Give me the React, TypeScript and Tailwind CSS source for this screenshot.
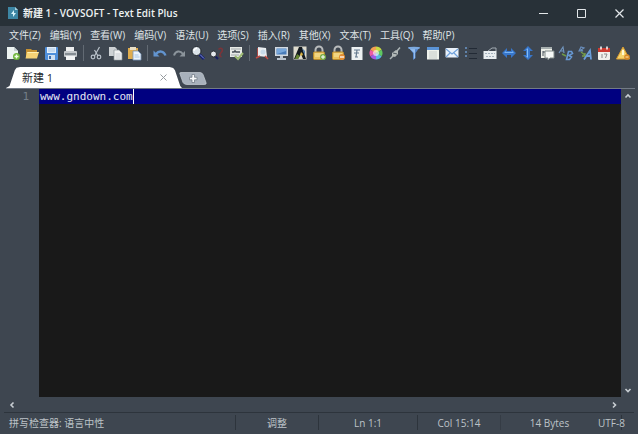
import React from "react";

const menus = [
    "文件(Z)",
    "编辑(Y)",
    "查看(W)",
    "编码(V)",
    "语法(U)",
    "选项(S)",
    "插入(R)",
    "其他(X)",
    "文本(T)",
    "工具(Q)",
    "帮助(P)",
];

const padlock = (
    <>
        <path d="M4.5 8V5a3.5 3.5 0 0 1 7 0v3" fill="none" stroke="#b9bcbd" strokeWidth="2" />
        <rect x="2.5" y="7" width="11" height="7.5" rx="1" fill="#e9c25c" stroke="#b98a2c" />
        <path d="M4 9h8M4 11h8" stroke="#f9e7a5" />
    </>
);

const groups: { label: string; icon: React.ReactNode }[][] = [
    [
        {
            label: "New",
            icon: (
                <>
                    <path d="M2 2h7l4 4v8H2z" fill="#edf3f1" />
                    <path d="M9 2v4h4" fill="#c6d0d2" />
                    <circle cx="11.5" cy="11.5" r="3.5" fill="#6fb53c" />
                    <path d="M11.5 9.5v4M9.5 11.5h4" stroke="#f2ffe6" strokeWidth="1.4" />
                </>
            ),
        },
        {
            label: "Open",
            icon: (
                <>
                    <path d="M2 4h5l1 1h5v8H2z" fill="#c69132" />
                    <path d="M3 7h12l-2 6.500H1.500z" fill="#f6d276" />
                    <path d="M3.500 7.500h11" stroke="#fff0b4" />
                </>
            ),
        },
        {
            label: "Save",
            icon: (
                <>
                    <rect x="2" y="2" width="13" height="13" rx="1" fill="#4f8fdb" />
                    <rect x="4" y="2" width="9" height="6" fill="#e4effa" />
                    <path d="M5 4h7M5 6h7" stroke="#a9c5e5" />
                    <rect x="5" y="10" width="7" height="5" fill="#d0e0f2" />
                    <rect x="6" y="11" width="2" height="3" fill="#3b6cac" />
                </>
            ),
        },
        {
            label: "Print",
            icon: (
                <>
                    <rect x="4" y="2" width="8" height="5" fill="#eceeef" />
                    <rect x="2" y="6" width="13" height="6" rx="1" fill="#c3c7cb" />
                    <path d="M3 9h11" stroke="#6f7880" strokeWidth="1.5" />
                    <rect x="4" y="11" width="9" height="4" fill="#f2f4f5" />
                </>
            ),
        },
    ],
    [
        {
            label: "Cut",
            icon: (
                <g fill="none" stroke="#b9c1c9" strokeWidth="1.2">
                    <path d="M11.500 2L6.500 11M6.500 5L10 11" />
                    <circle cx="5" cy="12" r="1.800" />
                    <circle cx="11" cy="12" r="1.800" />
                </g>
            ),
        },
        {
            label: "Copy",
            icon: (
                <>
                    <path d="M2 2h6l2 2v7H2z" fill="#cdd1d4" />
                    <path d="M7 5h5l3 3v7H7z" fill="#f0f1f2" stroke="#8a9299" strokeWidth=".7" />
                    <path d="M8.500 9h5M8.500 11h5M8.500 13h5" stroke="#bcc3c9" strokeWidth=".8" />
                </>
            ),
        },
        {
            label: "Paste",
            icon: (
                <>
                    <rect x="2" y="3" width="10" height="11" fill="#e0ac4d" />
                    <rect x="4" y="2" width="6" height="3" fill="#e9dfc5" />
                    <path d="M7 6h5l3 3v6H7z" fill="#edf4fb" stroke="#7895b6" strokeWidth=".8" />
                    <path d="M8.500 10h4M8.500 12h5" stroke="#a6c4e4" />
                </>
            ),
        },
    ],
    [
        {
            label: "Undo",
            icon: (
                <>
                    <path d="M4 9c3-4 8-3 9.500 1.500" fill="none" stroke="#6294cf" strokeWidth="2.300" />
                    <path d="M1.500 5.500v6h6z" fill="#6294cf" />
                </>
            ),
        },
        {
            label: "Redo",
            icon: (
                <>
                    <path d="M12 9C9 5 4.500 6 3 10.500" fill="none" stroke="#8b949b" strokeWidth="2" />
                    <path d="M14 6v5.500H8.500z" fill="#8b949b" />
                </>
            ),
        },
        {
            label: "Find",
            icon: (
                <>
                    <path d="M9.500 9.500l4.500 4.500" stroke="#14206f" strokeWidth="3" />
                    <path d="M10 9.500l4 4" stroke="#8793d3" />
                    <circle cx="6.500" cy="6" r="4.500" fill="#dce4ea" stroke="#20262c" />
                    <path d="M4 6a2.500 2.500 0 0 1 3-2.500" fill="none" stroke="#fff" strokeWidth="1.300" />
                </>
            ),
        },
        {
            label: "Replace",
            icon: (
                <>
                    <path d="M6 11l3 3" stroke="#151d60" strokeWidth="2" />
                    <circle cx="4.500" cy="9" r="3" fill="#e4e8eb" stroke="#242a30" />
                    <path d="M9.500 4.500c3-3 5 0 3 2.500S10 11 12.500 12" fill="none" stroke="#7b3439" strokeWidth="1.600" />
                </>
            ),
        },
        {
            label: "Spelling",
            icon: (
                <>
                    <rect x="2" y="2" width="12" height="10" fill="#e7eae6" />
                    <path d="M3 4h10M3 10h8" stroke="#a1a8ab" />
                    <path d="M4 7h2l1-1 1 1h4" fill="none" stroke="#454e55" strokeWidth="1.600" />
                    <path d="M7 11l3 3 5-6" fill="none" stroke="#9dbb72" strokeWidth="2" />
                </>
            ),
        },
    ],
    [
        {
            label: "Preview",
            icon: (
                <>
                    <path d="M4 2l8 1 1 9-9-1z" fill="#e9edf0" />
                    <path d="M2 13l4-2M11 11l3 3" stroke="#c44b43" strokeWidth="1.600" />
                    <circle cx="9" cy="7" r="2.500" fill="#c7dbea" />
                    <path d="M3.500 3v8" stroke="#a54a45" />
                </>
            ),
        },
        {
            label: "Full screen",
            icon: (
                <>
                    <rect x="2" y="2" width="13" height="9" fill="#d3dae1" />
                    <rect x="3.500" y="3.500" width="10" height="6" fill="#487cba" />
                    <path d="M4 4h9v2L4 9z" fill="#77a7db" />
                    <path d="M7 11h3v2h3v2H4v-2h3z" fill="#b9c3ce" />
                </>
            ),
        },
        {
            label: "Character map",
            icon: (
                <>
                    <rect x="1.500" y="1.500" width="13" height="13" fill="#dedbcd" />
                    <path d="M2 14l5-12h3l4 12h-3l-2-5-3 5z" fill="#141a1e" />
                    <path d="M5 9l3 2-2 3H3z" fill="#63832f" />
                    <path d="M9 7l2 2-1 2-2-1z" fill="#d8b242" />
                    <path d="M10 3l3 3v5z" fill="#517eac" />
                </>
            ),
        },
        {
            label: "Encrypt",
            icon: (
                <>
                    {padlock}
                    <circle cx="12" cy="12" r="3" fill="#72ab46" />
                    <path d="M12 10v4M10 12h4" stroke="#fff" />
                </>
            ),
        },
        {
            label: "Decrypt",
            icon: (
                <>
                    {padlock}
                    <circle cx="12" cy="12" r="3" fill="#e38b31" />
                    <path d="M10 12h4" stroke="#fff" strokeWidth="1.300" />
                </>
            ),
        },
        {
            label: "Font",
            icon: (
                <>
                    <rect x="2.500" y="2" width="11" height="13" fill="#edf1f2" />
                    <path d="M5 5h6M8 5L7 12M5 8h5M6 12h3" stroke="#63788d" strokeWidth="1.200" />
                </>
            ),
        },
        {
            label: "Color",
            icon: (
                <>
                    <path d="M8 8V1.500A6.500 6.500 0 0 1 13.600 4.700z" fill="#c6d944" />
                    <path d="M8 8l5.600-3.300a6.500 6.500 0 0 1 0 6.600z" fill="#5fc861" />
                    <path d="M8 8l5.600 3.300A6.500 6.500 0 0 1 8 14.500z" fill="#58b7e1" />
                    <path d="M8 8v6.500a6.500 6.500 0 0 1-5.600-3.200z" fill="#a35be5" />
                    <path d="M8 8l-5.600 3.300a6.500 6.500 0 0 1 0-6.600z" fill="#ee5ba6" />
                    <path d="M8 8L2.400 4.700A6.500 6.500 0 0 1 8 1.500z" fill="#f5a052" />
                    <circle cx="8" cy="8" r="3" fill="#fff" opacity=".6" />
                </>
            ),
        },
        {
            label: "Plugin",
            icon: (
                <>
                    <path d="M3 14l4-4M10 6l3-3.500" stroke="#abb4b6" strokeWidth="1.500" />
                    <path d="M5 8l4-3 2 1v3l-3 3-3-1z" fill="#b2b9b8" />
                    <path d="M6 8l4 1" stroke="#4c565e" />
                </>
            ),
        },
        {
            label: "Filter",
            icon: (
                <>
                    <path d="M2 2h12L9.500 8v5L7 15V8z" fill="#5688cc" />
                    <path d="M3 3h6v10l-1 1V8z" fill="#95bded" />
                    <ellipse cx="8" cy="3" rx="6" ry="1.300" fill="#7caae0" />
                </>
            ),
        },
        {
            label: "Form",
            icon: (
                <>
                    <rect x="2" y="2" width="12" height="12.500" fill="#eff2ec" />
                    <path d="M2 3.500h12" stroke="#5a93d6" strokeWidth="3" />
                    <path d="M4 7h8M4 9h8M4 11h8M4 13h8" stroke="#c5cbc9" />
                </>
            ),
        },
        {
            label: "Mail",
            icon: (
                <>
                    <rect x="1.500" y="3" width="13" height="9.500" rx="1" fill="#eaf2fb" />
                    <path d="M2 4l6 5 6-5M2 12l4-4M14 12l-4-4" fill="none" stroke="#71a3dc" strokeWidth="1.200" />
                </>
            ),
        },
        {
            label: "List",
            icon: (
                <>
                    <path d="M3 2v12" stroke="#6b97c7" strokeWidth="1.500" strokeDasharray="2 2" />
                    <path d="M6 3.500h8M6 8.500h8M6 13.500h8" stroke="#222a35" />
                </>
            ),
        },
        {
            label: "Keyboard",
            icon: (
                <>
                    <path d="M6 6l4-3h4v3" fill="none" stroke="#a2abb2" />
                    <rect x="1.500" y="6" width="13" height="8" fill="#e8edf0" />
                    <path d="M3 8.500h10M4 11.500h8" stroke="#a3b1bd" strokeDasharray="2 1" />
                </>
            ),
        },
        {
            label: "Horizontal",
            icon: (
                <>
                    <path d="M1 8l5-5v3h4V3l5 5-5 5v-3H6v3z" fill="#3776cb" />
                    <path d="M3 8l2-2v1h6V6l2 2z" fill="#79b4f3" />
                </>
            ),
        },
        {
            label: "Vertical",
            icon: (
                <>
                    <path d="M8 1l5 5h-3v4h3l-5 5-5-5h3V6H3z" fill="#3776cb" />
                    <path d="M8 3L6 5h1v6H6l2 2z" fill="#83bcf6" />
                </>
            ),
        },
        {
            label: "Windows",
            icon: (
                <>
                    <rect x="2" y="2" width="11" height="11" fill="#edf0e9" />
                    <path d="M2 3h11" stroke="#a6aeae" strokeWidth="2" />
                    <path d="M4 6v5M4 7h4" stroke="#47515a" />
                    <path d="M6 6h9v7h-4l-2 2v-2H6z" fill="#f5f8f6" stroke="#7f8887" />
                </>
            ),
        },
        {
            label: "Lower case",
            icon: (
                <>
                    <path d="M1 8l4-6 1 6M3 6h3" fill="none" stroke="#7194bd" strokeWidth="1.200" />
                    <path d="M4 9l4 2" stroke="#709b48" strokeWidth="1.500" />
                    <path d="M8.500 14.500l2-8h3l1 2-3.500 2 2.500 1.500-2 2.500z" fill="none" stroke="#6799d4" strokeWidth="1.600" />
                </>
            ),
        },
        {
            label: "Upper case",
            icon: (
                <>
                    <path d="M2 6l2-4 3 1-3 2 2 1z" fill="none" stroke="#698dba" strokeWidth="1.200" />
                    <path d="M4 7l4 3M8 8v3H5" fill="none" stroke="#769e49" strokeWidth="1.300" />
                    <path d="M7 14.500l6-9 1 9M10 11h4" fill="none" stroke="#6b9edb" strokeWidth="1.800" />
                </>
            ),
        },
        {
            label: "Date",
            icon: (
                <>
                    <rect x="2" y="3" width="12" height="12" rx="1" fill="#f1f0ec" />
                    <path d="M2 3h12v4H2z" fill="#cc3b31" />
                    <path d="M5 1.500v3M11 1.500v3" stroke="#fff" strokeWidth="1.500" />
                    <path d="M6 9v4M8 9h3l-1.500 4" fill="none" stroke="#8c8c8c" />
                </>
            ),
        },
        {
            label: "Alert",
            icon: (
                <>
                    <path d="M8 2l6.500 12h-13z" fill="#f5d36c" stroke="#d99b2f" strokeLinejoin="round" />
                    <path d="M8 5v5" stroke="#fff8d4" strokeWidth="2" />
                    <circle cx="12" cy="12" r="2.800" fill="#d88724" />
                    <path d="M10.500 12h3" stroke="#ffe9ac" />
                </>
            ),
        },
    ],
];

function Chevron({ d }: { d: string }) {
    return (
        <svg viewBox="0 0 8 8" className="size-2" aria-hidden="true">
            <path d={d} fill="none" stroke="#c8ced3" strokeWidth="1.6" />
        </svg>
    );
}

function TitleBar() {
    return (
        <header className="flex h-[26px] shrink-0 items-center bg-[#283138] pl-2">
            <svg viewBox="0 0 10 12" className="h-3 w-[10px]" aria-hidden="true">
                <path d="M0 0h7l3 3v9H0z" fill="#3d86a4" />
                <path d="M7 0v3h3z" fill="#a4d1df" />
                <path d="M6 3L3 7h2v3l3-4H6z" fill="#d8f3fa" />
            </svg>
            <h1 className="ml-[5px] flex-1 text-[10px] font-semibold text-[#eef1f2]">新建 1 - VOVSOFT - Text Edit Plus</h1>
            <div className="flex h-full text-[#e3e7ea]">
                <button aria-label="Minimize" className="grid w-[38px] place-items-center">
                    <svg viewBox="0 0 9 9" className="size-[9px]"><path d="M0 4.500h9" stroke="currentColor" /></svg>
                </button>
                <button aria-label="Maximize" className="grid w-[38px] place-items-center">
                    <svg viewBox="0 0 9 9" className="size-[9px]"><path d="M.5.500h8v8h-8z" fill="none" stroke="currentColor" /></svg>
                </button>
                <button aria-label="Close" className="grid w-[38px] place-items-center">
                    <svg viewBox="0 0 9 9" className="size-[9px]"><path d="M.5.500l8 8M8.500.500l-8 8" stroke="currentColor" strokeWidth="1.200" /></svg>
                </button>
            </div>
        </header>
    );
}

export default function App() {
    return (
        <div className="flex h-screen flex-col overflow-hidden bg-[#3e4650] font-['Open_Sans','Noto_Sans_CJK_SC',sans-serif] text-[10px] leading-4 text-[#dfe3e6]">
            <TitleBar />
            <nav className="flex h-[17px] shrink-0 items-center gap-[9px] pl-[9px]">
                {menus.map((menu) => (
                    <button key={menu} className="whitespace-nowrap">{menu}</button>
                ))}
            </nav>
            <div className="flex h-5 shrink-0 items-center gap-[3px] pl-[5px]">
                {groups.map((group, i) => (
                    <React.Fragment key={i}>
                        {i > 0 && (
                            <div className="flex w-1 shrink-0 justify-center">
                                <div className="h-4 w-px bg-[#626a73]" />
                            </div>
                        )}
                        {group.map((tool) => (
                            <button key={tool.label} aria-label={tool.label} className="size-4 shrink-0">
                                <svg viewBox="0 0 16 16" className="size-4">{tool.icon}</svg>
                            </button>
                        ))}
                    </React.Fragment>
                ))}
            </div>
            <div className="mr-[3px] ml-[6px] flex h-[26px] shrink-0 items-end border-b border-[#737b86]">
                <div className="flex h-[21px] w-44 items-center justify-between bg-white pr-[15px] pl-4 text-[11px] text-[#25292d] [clip-path:polygon(0_100%,2%_90%,5%_15%,6%_3%,8%_0,93%_0,95%_5%,96%_15%,99%_90%,100%_100%)]">
                    <button>新建 1</button>
                    <button aria-label="Close tab" className="grid size-2 place-items-center">
                        <svg viewBox="0 0 7 7" className="size-[7px]"><path d="M.5.500l6 6M6.500.500l-6 6" stroke="#969b9f" /></svg>
                    </button>
                </div>
                <button aria-label="New tab" className="mb-[3px] -ml-[3px]">
                    <svg viewBox="0 0 28 13" className="h-[13px] w-7">
                        <path d="M2 .500h19q2 0 3 2l3 8q1 2-2 2H8q-3 0-4-2L1 2q-1-1.500 1-1.500z" fill="#a8b1bc" stroke="#c7ced5" strokeWidth=".7" />
                        <path d="M13 2.500h2.500v2.800H18v2.500h-2.500v2.700H13V7.800h-2.500V5.300H13z" fill="#f6f8f9" stroke="#69737e" strokeWidth=".7" />
                    </svg>
                </button>
            </div>
            <main className="flex min-h-0 flex-1 font-['DejaVu_Sans_Mono',monospace] text-[11px] leading-[15px]">
                <div className="w-[39px] shrink-0 pr-[10px] text-right text-[#747e88]">1</div>
                <div className="relative min-w-0 flex-1">
                    <textarea
                        aria-label="Editor"
                        defaultValue="www.gndown.com"
                        spellCheck={false}
                        className="block h-full w-full resize-none overflow-hidden bg-[linear-gradient(#000080_15px,#191919_15px)] pl-px text-[#e4e6f2] outline-none"
                    />
                    <span className="absolute top-0 left-[14ch] ml-px h-[15px] w-px bg-white" />
                </div>
                <div className="flex w-[17px] shrink-0 flex-col items-center justify-between pt-[3px] pr-[3px] pb-[3px]">
                    <button aria-label="Scroll up"><Chevron d="M1.500 5.500L4 3l2.500 2.500" /></button>
                    <button aria-label="Scroll down"><Chevron d="M1.500 3L4 5.500 6.500 3" /></button>
                </div>
            </main>
            <div className="flex h-[15px] shrink-0 items-center justify-between pr-5 pl-2">
                <button aria-label="Scroll left"><Chevron d="M5.500 1.500L3 4l2.500 2.500" /></button>
                <button aria-label="Scroll right"><Chevron d="M3 1.500L5.500 4 3 6.500" /></button>
            </div>
            <footer className="mx-1 flex h-[22px] shrink-0 items-stretch border-t border-[#2d343c] pt-[2px] pb-1 text-center text-[#bdc3c8]">
                <div className="flex-1 pl-[5px] text-left">拼写检查器: 语言中性</div>
                <div className="w-[83px] border-l border-[#2d343c]">调整</div>
                <div className="w-[99px] border-l border-[#2d343c]">Ln 1:1</div>
                <div className="w-[83px] border-l border-[#2d343c]">Col 15:14</div>
                <div className="w-[98px] border-l border-[#353c45]">14 Bytes</div>
                <div className="w-6 border-r border-[#2d343c] text-left whitespace-nowrap">UTF-8</div>
                <div className="w-3" />
            </footer>
        </div>
    );
}
